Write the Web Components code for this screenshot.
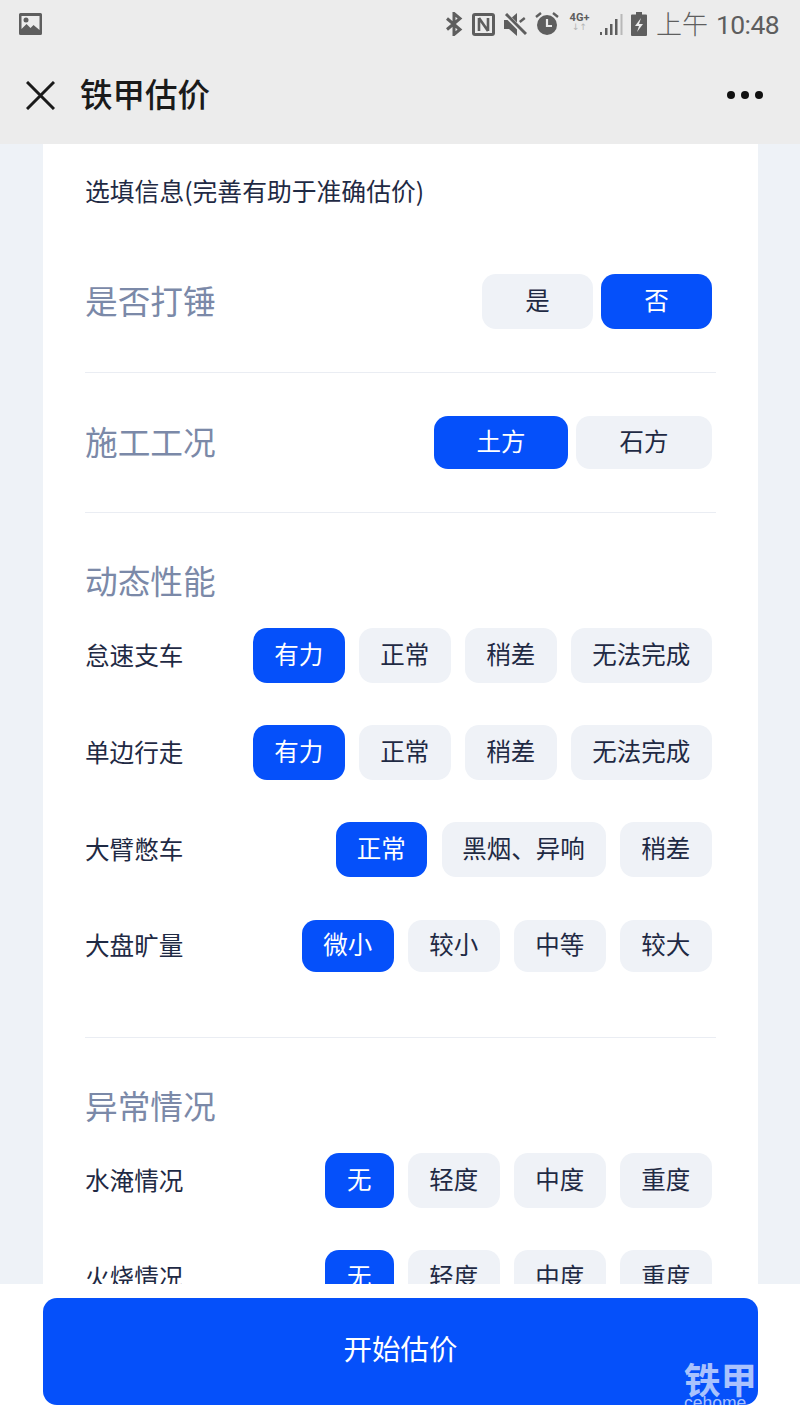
<!DOCTYPE html>
<html lang="zh">
<head>
<meta charset="utf-8">
<title>铁甲估价</title>
<style>
  html, body { margin: 0; height: 100%; }
  body {
    width: 800px;
    height: 1422px;
    overflow: hidden;
    display: flex;
    flex-direction: column;
    background: #eef2f7;
    font-family: "Noto Sans CJK SC", "Noto Sans", sans-serif;
    color: #1f2a44;
  }
</style>
</head>
<body>
<app-header title-text="铁甲估价"></app-header>

<estimate-card>
  <span slot="intro">选填信息(完善有助于准确估价)</span>

  <form-section rule>
    <option-row big label="是否打锤" height="55">
      <option-chip width="111">是</option-chip>
      <option-chip width="111" on>否</option-chip>
    </option-row>
  </form-section>

  <form-section rule>
    <option-row big label="施工工况" height="53">
      <option-chip width="134" on>土方</option-chip>
      <option-chip width="136">石方</option-chip>
    </option-row>
  </form-section>

  <form-section heading="动态性能" tail="65" rule>
    <option-row label="怠速支车">
      <option-chip on>有力</option-chip><option-chip>正常</option-chip><option-chip>稍差</option-chip><option-chip width="140.5">无法完成</option-chip>
    </option-row>
    <option-row label="单边行走">
      <option-chip on>有力</option-chip><option-chip>正常</option-chip><option-chip>稍差</option-chip><option-chip width="140.5">无法完成</option-chip>
    </option-row>
    <option-row label="大臂憋车">
      <option-chip on>正常</option-chip><option-chip width="164">黑烟、异响</option-chip><option-chip>稍差</option-chip>
    </option-row>
    <option-row label="大盘旷量" height="52" style="margin-top:1px">
      <option-chip on>微小</option-chip><option-chip>较小</option-chip><option-chip>中等</option-chip><option-chip>较大</option-chip>
    </option-row>
  </form-section>

  <form-section heading="异常情况">
    <option-row label="水淹情况">
      <option-chip width="68.5" on>无</option-chip><option-chip>轻度</option-chip><option-chip>中度</option-chip><option-chip>重度</option-chip>
    </option-row>
    <option-row label="火烧情况">
      <option-chip width="68.5" on>无</option-chip><option-chip>轻度</option-chip><option-chip>中度</option-chip><option-chip>重度</option-chip>
    </option-row>
  </form-section>
</estimate-card>

<action-bar>开始估价</action-bar>

<script>
class StatusBar extends HTMLElement {
  constructor() {
    super();
    this.attachShadow({ mode: 'open' }).innerHTML = `
      <style>
        :host { display: flex; align-items: center; height: 48px; padding: 0 21px 0 19px; color: #5e5e5e; }
        svg { display: block; flex: none; }
        .right { margin-left: auto; display: flex; align-items: center; }
        .time { font: 26px/48px "Noto Sans CJK SC", sans-serif; font-weight: 300; margin-left: 9px; white-space: nowrap; }
        .digits { font-family: Roboto, sans-serif; font-size: 26.5px; font-weight: 400; margin-left: 8px; letter-spacing: -0.6px; }
        .net { font: bold 11px/11px Roboto, sans-serif; text-align: center; width: 25px; margin: -6px 8px 0 8px; }
        .net i { display: block; font: normal 9px/8px "DejaVu Sans", sans-serif; color: #b5b5b5; }
      </style>
      <svg width="23" height="22" viewBox="0 0 23 22" fill="#5e5e5e">
        <path d="M1.5 0h20A1.5 1.5 0 0 1 23 1.500v19a1.500 1.500 0 0 1-1.500 1.500h-20A1.500 1.500 0 0 1 0 20.500v-19A1.500 1.500 0 0 1 1.500 0zM2.500 3v13l5-5 4 4 3-3 6 5V3z" fill-rule="evenodd"/>
        <circle cx="7" cy="7" r="2.500"/>
      </svg>
      <div class="right">
        <svg width="18" height="24" viewBox="0 0 18 24" fill="none" stroke="#5e5e5e" stroke-width="3"><path d="M2 6.500l13 11-6 5V1.500l6 5-13 11"/></svg>
        <svg style="margin-left:9px" width="23" height="23" viewBox="0 0 23 23"><rect width="23" height="23" rx="3" fill="#5e5e5e"/><rect x="3" y="3" width="17" height="17" fill="#ececec"/><path d="M7 5v13M16 5v13M7 5l9 13" fill="none" stroke="#5e5e5e" stroke-width="2.600"/></svg>
        <svg style="margin-left:9px" width="23" height="23" viewBox="0 0 23 23"><path d="M0 7h5l8-7v23l-8-7H0z" fill="#5e5e5e"/><path d="M0 0l21 21" stroke="#ececec" stroke-width="5"/><path d="M2 1l20 20" stroke="#5e5e5e" stroke-width="3"/><path d="M15 8l5-4 1.500 2-5 4z" fill="#5e5e5e"/></svg>
        <svg style="margin-left:8px" width="24" height="24" viewBox="0 0 24 24"><circle cx="12" cy="13" r="10" fill="#5e5e5e"/><path d="M12 7v7h5" fill="none" stroke="#ececec" stroke-width="2.200"/><path d="M1 5l5-4M23 5l-5-4" stroke="#5e5e5e" stroke-width="2.400"/></svg>
        <div class="net">4G+<i>↓↑</i></div>
        <svg width="23" height="22" viewBox="0 0 23 22" fill="#5e5e5e"><path d="M0 19h2v3H0zM5 15h2.500v7H5zM10 11h2.500v11H10zM15 6h2.500v16H15z"/><path d="M20.500 1h2v21h-2z" fill="#b8b8b8"/></svg>
        <svg style="margin-left:8px" width="16" height="24" viewBox="0 0 16 24"><path d="M5 0h6v2.500h4a1 1 0 0 1 1 1V23a1 1 0 0 1-1 1H1a1 1 0 0 1-1-1V3.500a1 1 0 0 1 1-1h4z" fill="#5e5e5e"/><path d="M10 6L4 14h4l-2 6 6-8H8z" fill="#ececec"/></svg>
        <span class="time">上午<span class="digits">10:48</span></span>
      </div>`;
  }
}

class AppHeader extends HTMLElement {
  constructor() {
    super();
    this.attachShadow({ mode: 'open' }).innerHTML = `
      <style>
        :host { display: block; flex: none; height: 144px; background: #ececec; }
        .nav { display: flex; align-items: center; height: 94px; padding: 0 37px 0 26px; }
        .title { font-size: 32.5px; line-height: 44px; font-weight: 500; color: #1a1a1a; margin-left: 25px; padding-bottom: 4px; }
        .more { margin-left: auto; display: flex; gap: 6px; }
        .more i { width: 8px; height: 8px; border-radius: 50%; background: #111; }
        svg { display: block; }
      </style>
      <status-bar></status-bar>
      <div class="nav">
        <svg width="29" height="29" viewBox="0 0 29 29" fill="none" stroke="#1a1a1a" stroke-width="3"><path d="M1 1l27 27M28 1L1 28"/></svg>
        <div class="title"></div>
        <div class="more"><i></i><i></i><i></i></div>
      </div>`;
    this.shadowRoot.querySelector('.title').textContent = this.getAttribute('title-text');
  }
}

class EstimateCard extends HTMLElement {
  constructor() {
    super();
    this.attachShadow({ mode: 'open' }).innerHTML = `
      <style>
        :host { display: block; flex: 1; min-height: 0; overflow: hidden; padding: 0 42px 0 43px; }
        .card { background: #fff; padding: 29px 42px 0; height: 100%; box-sizing: border-box; }
        .intro { font-size: 24.8px; line-height: 34px; color: #1f2a44; margin-bottom: 67px; }
      </style>
      <div class="card">
        <div class="intro"><slot name="intro"></slot></div>
        <slot></slot>
      </div>`;
  }
}

class FormSection extends HTMLElement {
  constructor() {
    super();
    const heading = this.getAttribute('heading');
    const tail = this.getAttribute('tail') || 43;
    this.attachShadow({ mode: 'open' }).innerHTML = `
      <style>
        :host { display: block; }
        h2 { margin: 0 0 26px; padding-top: 2px; font-size: 32.7px; line-height: 44px; font-weight: 400; color: #7b89a8; }
        .rows { display: flex; flex-direction: column; gap: 42px; }
        .rule { height: 1px; background: #eaedf3; margin: ${tail}px 0 43px; }
      </style>
      ${heading ? `<h2>${heading}</h2>` : ''}
      <div class="rows"><slot></slot></div>
      ${this.hasAttribute('rule') ? '<div class="rule"></div>' : ''}`;
  }
}

class OptionRow extends HTMLElement {
  constructor() {
    super();
    const height = this.getAttribute('height') || 55;
    this.attachShadow({ mode: 'open' }).innerHTML = `
      <style>
        :host { display: flex; align-items: center; justify-content: space-between; height: ${height}px; padding-right: 4.5px; }
        :host([big]) { padding-right: 4px; }
        .label { font-size: 24.6px; color: #1f2a44; white-space: nowrap; padding-bottom: 4px; }
        :host([big]) .label { font-size: 32.7px; color: #7b89a8; padding-bottom: 4px; }
        .chips { display: flex; gap: 14.5px; height: 100%; }
        :host([big]) .chips { gap: 8px; }
      </style>
      <div class="label"></div>
      <div class="chips"><slot></slot></div>`;
    this.shadowRoot.querySelector('.label').textContent = this.getAttribute('label');
  }
}

class OptionChip extends HTMLElement {
  constructor() {
    super();
    const width = this.getAttribute('width') || 91.5;
    this.attachShadow({ mode: 'open' }).innerHTML = `
      <style>
        :host { display: flex; align-items: center; justify-content: center; box-sizing: border-box; width: ${width}px; padding-bottom: 5px;
          border-radius: 14px; background: #eff2f7; color: #1f2a44; font-size: 24.5px; white-space: nowrap; }
        :host([on]) { background: #0550fa; color: #fff; }
      </style>
      <slot></slot>`;
  }
}

class ActionBar extends HTMLElement {
  constructor() {
    super();
    this.attachShadow({ mode: 'open' }).innerHTML = `
      <style>
        :host { display: block; flex: none; height: 138px; box-sizing: border-box; padding: 14px 42px 17px 43px; background: #fff; }
        .btn { position: relative; overflow: hidden; display: flex; align-items: center; justify-content: center; height: 107px; padding-bottom: 8px; box-sizing: border-box;
          border-radius: 14px; background: #0550fa; color: #fff; font-size: 28.5px; }
        .mark { position: absolute; left: 641px; top: 63px; color: rgba(255,255,255,.66); white-space: nowrap; }
        .mark b { display: block; font-size: 36.5px; line-height: 36px; font-weight: 700; }
        .mark span { display: block; font: 17.5px/14px "Liberation Sans", sans-serif; margin-top: -1px; }
      </style>
      <div class="btn"><slot></slot><div class="mark"><b>铁甲网</b><span>cehome</span></div></div>`;
  }
}

customElements.define('status-bar', StatusBar);
customElements.define('app-header', AppHeader);
customElements.define('estimate-card', EstimateCard);
customElements.define('form-section', FormSection);
customElements.define('option-row', OptionRow);
customElements.define('option-chip', OptionChip);
customElements.define('action-bar', ActionBar);
</script>
</body>
</html>
